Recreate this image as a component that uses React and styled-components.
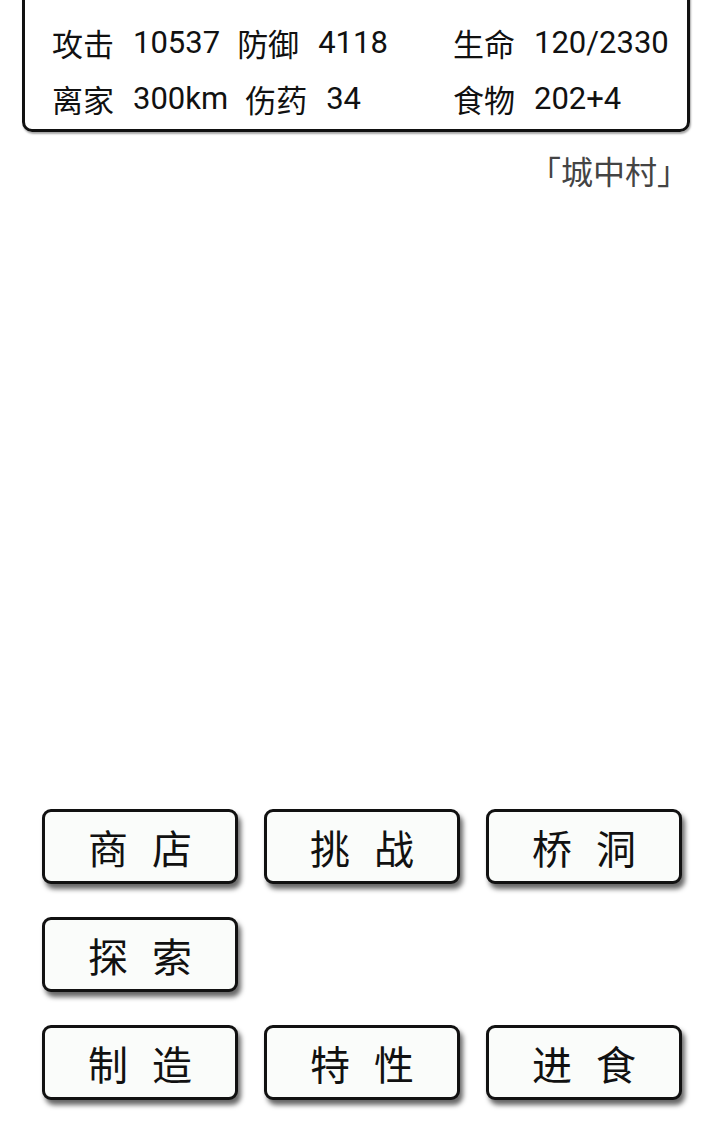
import React from "react";
import styled, { createGlobalStyle } from "styled-components";

const GlobalStyle = createGlobalStyle`
	html, body {
		margin: 0;
		padding: 0;
		background: #ffffff;
	}
	body {
		font-family: Roboto, "Noto Sans CJK SC", sans-serif;
		overflow: hidden;
	}
`;

const Screen = styled.div`
	width: 720px;
	height: 1123px;
	display: flex;
	flex-direction: column;
	overflow: hidden;
`;

const StatusBox = styled.div`
	margin: -20px 30px 0 22px;
	padding: 31px 0 3px 27px;
	border: 3px solid #111;
	border-radius: 10px;
	box-shadow: 1px 2px 2px rgba(0, 0, 0, 0.35);
`;

const StatRow = styled.div`
	display: flex;
	align-items: center;
	height: 56px;
	font-size: 31px;
	color: #111;
`;

const StatGroup = styled.div`
	display: flex;
	align-items: center;
	gap: 17px;
	width: 401px;
`;

const Stat = styled.span`
	display: inline-flex;
	align-items: center;
	white-space: nowrap;
`;

const StatLabel = styled.span`
	font-family: "Noto Sans CJK SC", sans-serif;
	margin-right: 19px;
`;

const StatValue = styled.span`
	font-family: Roboto, sans-serif;
`;

const Place = styled.div`
	align-self: flex-end;
	margin: 16px 31px 0 0;
	font-family: "Noto Sans CJK SC", sans-serif;
	font-size: 32px;
	color: #444;
	line-height: 44px;
`;

const Spacer = styled.div`
	flex: 1;
`;

const ButtonPanel = styled.div`
	display: flex;
	flex-direction: column;
	gap: 33px;
	padding: 0 0 23px 42px;
`;

const ButtonRow = styled.div`
	display: grid;
	grid-template-columns: repeat(3, 196px);
	column-gap: 26px;
`;

const ActionButton = styled.button`
	height: 75px;
	box-sizing: border-box;
	border: 3px solid #111;
	border-radius: 9px;
	background: #fafcfa;
	box-shadow: 3px 5px 5px rgba(0, 0, 0, 0.6);
	display: flex;
	align-items: center;
	justify-content: center;
	gap: 24px;
	padding: 0;
	font-family: "Noto Sans CJK SC", sans-serif;
	font-size: 40px;
	color: #111;
	cursor: pointer;
`;

const stats = [
	{
		left: [
			["攻击", "10537"],
			["防御", "4118"],
		],
		right: ["生命", "120/2330"],
	},
	{
		left: [
			["离家", "300km"],
			["伤药", "34"],
		],
		right: ["食物", "202+4"],
	},
];

const buttonRows = [["商店", "挑战", "桥洞"], ["探索"], ["制造", "特性", "进食"]];

function StatItem({ label, value }) {
	return (
		<Stat>
			<StatLabel>{label}</StatLabel>
			<StatValue>{value}</StatValue>
		</Stat>
	);
}

export default function App() {
	return (
		<Screen>
			<GlobalStyle />
			<StatusBox>
				{stats.map((row, i) => (
					<StatRow key={i}>
						<StatGroup>
							{row.left.map(([label, value]) => (
								<StatItem key={label} label={label} value={value} />
							))}
						</StatGroup>
						<StatItem label={row.right[0]} value={row.right[1]} />
					</StatRow>
				))}
			</StatusBox>
			<Place>「城中村」</Place>
			<Spacer />
			<ButtonPanel>
				{buttonRows.map((row, i) => (
					<ButtonRow key={i}>
						{row.map((name) => (
							<ActionButton key={name}>
								{name.split("").map((ch) => (
									<span key={ch}>{ch}</span>
								))}
							</ActionButton>
						))}
					</ButtonRow>
				))}
			</ButtonPanel>
		</Screen>
	);
}
